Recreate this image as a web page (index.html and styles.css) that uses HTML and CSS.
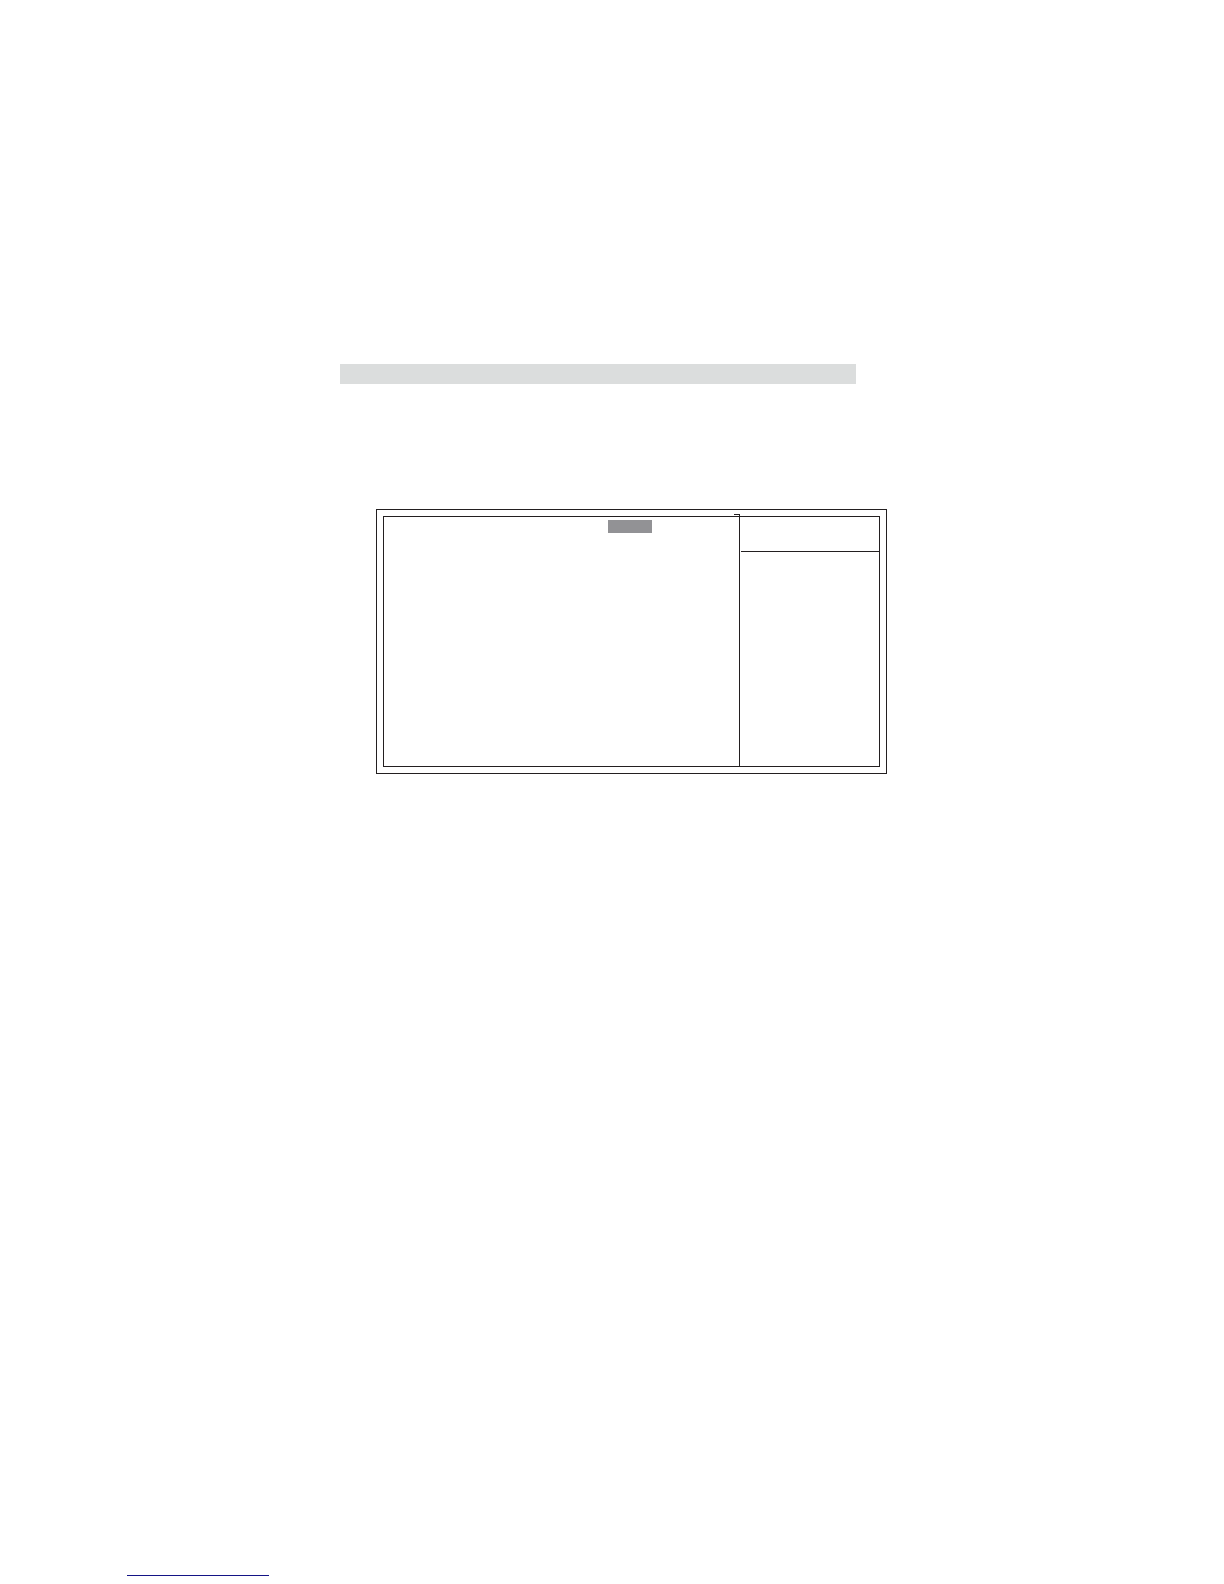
FILE: index.html
```
<!DOCTYPE html>
<html lang="en">
<head>
  <meta charset="UTF-8">
  <meta name="viewport" content="width=device-width, initial-scale=1.0">
  <title>Setup screen</title>
  <link rel="stylesheet" href="styles.css">
</head>
<body>
  <main class="content">
    <div class="heading-bar"></div>
    <div class="frame">
      <div class="screen">
        <div class="settings">
          <div class="selected"></div>
        </div>
        <div class="help">
          <div class="help-head"></div>
        </div>
      </div>
    </div>
  </main>
  <footer class="footer">
    <div class="footer-line"></div>
  </footer>
</body>
</html>
```

FILE: styles.css
```
*,
*::before {
  box-sizing: border-box;
}
body {
  margin: 0;
  min-height: 100vh;
  display: flex;
  flex-direction: column;
  background: #fff;
  font-family: "Liberation Sans", Arial, sans-serif;
}
.content {
  padding: 364px 337px 0 340px;
}
.heading-bar {
  height: 20px;
  margin-right: 31px;
  background: #dbdddd;
}
/* double border around the setup screen */
.frame {
  margin: 125px 0 0 36px;
  padding: 6px;
  border: 1px solid #231f20;
}
.screen {
  display: flex;
  min-height: 251px;
  border: 1px solid #231f20;
}
.settings {
  flex: 1;
  display: flex;
  justify-content: flex-end;
  align-items: flex-start;
  padding: 3px 87px 0 0;
}
.selected {
  width: 44px;
  height: 13px;
  background: #929295;
}
.help {
  position: relative;
  width: 140px;
  border-left: 1px solid #231f20;
}
/* small corner where the divider meets the top border */
.help::before {
  content: "";
  position: absolute;
  top: -3px;
  left: -6px;
  width: 6px;
  height: 3px;
  border-top: 1px solid #231f20;
  border-right: 1px solid #231f20;
}
.help-head {
  height: 35px;
  margin-left: 1px;
  border-bottom: 1px solid #231f20;
}
.footer {
  margin-top: auto;
  padding: 0 127px 8px;
}
.footer-line {
  width: 142px;
  height: 1px;
  background: #141486;
}
```
